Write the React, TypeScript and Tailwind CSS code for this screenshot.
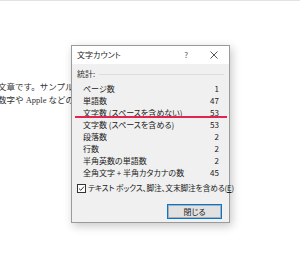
import React from "react";

const rows: [string, string][] = [
  ["ページ数", "1"],
  ["単語数", "47"],
  ["文字数 (スペースを含めない)", "53"],
  ["文字数 (スペースを含める)", "53"],
  ["段落数", "2"],
  ["行数", "2"],
  ["半角英数の単語数", "2"],
  ["全角文字 + 半角カタカナの数", "45"],
];

export default function App() {
  return (
    <div className="relative w-[300px] h-[258px] bg-white overflow-hidden">
      <div className="h-px bg-[#e3e3e3]" />
      <div
        className="mt-[80px] ml-[-2px] w-[73px] overflow-hidden text-[8.5px] leading-[13px] text-[#333] whitespace-nowrap"
        style={{ fontFamily: '"Liberation Serif", "Noto Sans CJK JP", serif' }}
      >
        <div>文章です。サンプル</div>
        <div>数字や Apple などの</div>
      </div>

      <div
        className="absolute left-[71px] top-[45px] w-[159px] h-[178px] border border-[#9a9a9a] bg-[#f0f0f0] shadow-[2px_3px_9px_rgba(0,0,0,0.22)] flex flex-col text-[8px] text-[#1a1a1a] [font-feature-settings:'palt']"
        style={{ fontFamily: '"Noto Sans CJK JP", "Noto Sans", sans-serif' }}
      >
        <div className="h-[18px] bg-white flex items-center pl-[5px] pr-[10px] shrink-0">
          <span className="flex-1">文字カウント</span>
          <span className="text-[#555] mr-[22px]">?</span>
          <svg width="8" height="8" viewBox="0 0 8 8" className="mr-[1px]">
            <path d="M0.5 0.5 L7.5 7.5 M7.5 0.5 L0.5 7.5" stroke="#444" strokeWidth="0.9" fill="none" />
          </svg>
        </div>
        <div className="flex-1 flex flex-col pt-[4px]">
          <div className="flex items-center h-[12px] pl-[5px] pr-[5px]">
            <span className="text-[#333]">統計:</span>
            <div className="flex-1 h-px bg-[#dcdcdc] ml-[4px]" />
          </div>
          <div className="mt-[3px] flex flex-col pl-[11px] pr-[10px]">
            {rows.map(([l, v]) => (
              <div key={l} className="flex justify-between items-center h-[12px]">
                <span>{l}</span>
                <span>{v}</span>
              </div>
            ))}
          </div>
          <div className="mt-[3px] h-[12px] flex items-center pl-[5px]">
            <svg width="9" height="9" viewBox="0 0 9 9" className="mr-[2px] shrink-0">
              <rect x="0.5" y="0.5" width="8" height="8" fill="#fff" stroke="#333" />
              <path d="M2 4.6 L3.8 6.3 L7 2.6" stroke="#222" strokeWidth="0.9" fill="none" />
            </svg>
            <span className="whitespace-nowrap text-[7.7px] tracking-[-0.1px]">
              テキスト ボックス、脚注、文末脚注を含める(<span className="underline">E</span>)
            </span>
          </div>
          <div className="mt-[10px] flex justify-end pr-[7px]">
            <div className="w-[55px] h-[15px] border border-[#0078d7] bg-[#e1e1e1] flex items-center justify-center">
              <div className="w-full h-full border border-[#adadad] flex items-center justify-center">
                閉じる
              </div>
            </div>
          </div>
        </div>
      </div>

      <div className="absolute left-[75px] top-[116px] w-[152px] h-[2px] bg-[#e0254f]" />
    </div>
  );
}
